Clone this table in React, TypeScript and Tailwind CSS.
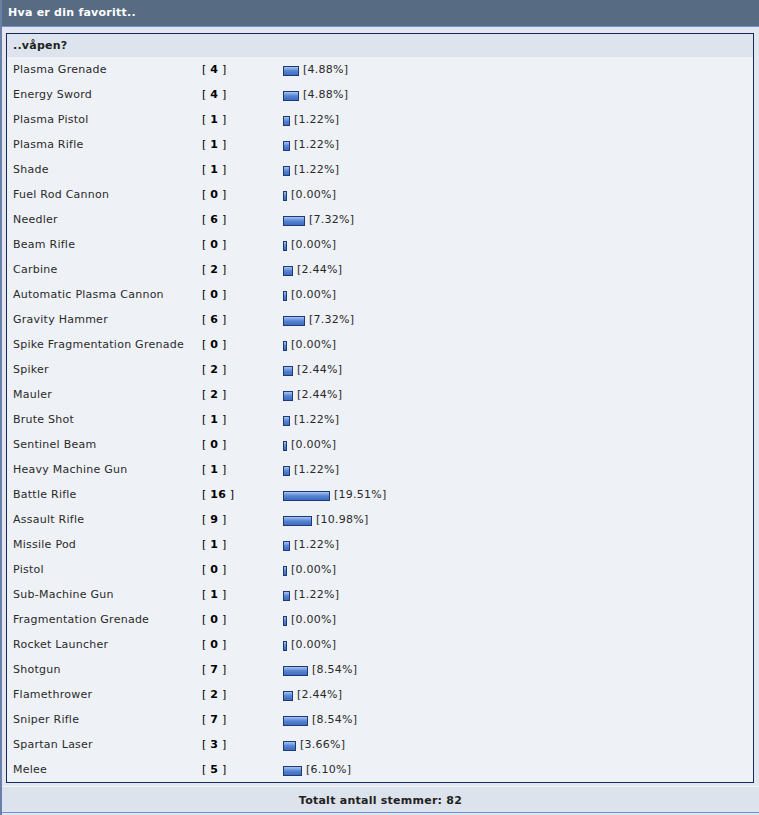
import React from 'react';

// ─── Poll data ────────────────────────────────────────────────
const options: { name: string; votes: number; pct: string }[] = [
  { name: 'Plasma Grenade', votes: 4, pct: '4.88' },
  { name: 'Energy Sword', votes: 4, pct: '4.88' },
  { name: 'Plasma Pistol', votes: 1, pct: '1.22' },
  { name: 'Plasma Rifle', votes: 1, pct: '1.22' },
  { name: 'Shade', votes: 1, pct: '1.22' },
  { name: 'Fuel Rod Cannon', votes: 0, pct: '0.00' },
  { name: 'Needler', votes: 6, pct: '7.32' },
  { name: 'Beam Rifle', votes: 0, pct: '0.00' },
  { name: 'Carbine', votes: 2, pct: '2.44' },
  { name: 'Automatic Plasma Cannon', votes: 0, pct: '0.00' },
  { name: 'Gravity Hammer', votes: 6, pct: '7.32' },
  { name: 'Spike Fragmentation Grenade', votes: 0, pct: '0.00' },
  { name: 'Spiker', votes: 2, pct: '2.44' },
  { name: 'Mauler', votes: 2, pct: '2.44' },
  { name: 'Brute Shot', votes: 1, pct: '1.22' },
  { name: 'Sentinel Beam', votes: 0, pct: '0.00' },
  { name: 'Heavy Machine Gun', votes: 1, pct: '1.22' },
  { name: 'Battle Rifle', votes: 16, pct: '19.51' },
  { name: 'Assault Rifle', votes: 9, pct: '10.98' },
  { name: 'Missile Pod', votes: 1, pct: '1.22' },
  { name: 'Pistol', votes: 0, pct: '0.00' },
  { name: 'Sub-Machine Gun', votes: 1, pct: '1.22' },
  { name: 'Fragmentation Grenade', votes: 0, pct: '0.00' },
  { name: 'Rocket Launcher', votes: 0, pct: '0.00' },
  { name: 'Shotgun', votes: 7, pct: '8.54' },
  { name: 'Flamethrower', votes: 2, pct: '2.44' },
  { name: 'Sniper Rifle', votes: 7, pct: '8.54' },
  { name: 'Spartan Laser', votes: 3, pct: '3.66' },
  { name: 'Melee', votes: 5, pct: '6.10' },
];

// bar width in px, measured off the original graphic
const barWidth = (votes: number) => (votes >= 16 ? 47 : votes >= 9 ? 29 : 4 + votes * 3);

const font = { fontFamily: '"DejaVu Sans", Verdana, sans-serif' };

export default function App() {
  return (
    <div className="w-[759px] h-[815px] bg-[#e1e6ef] text-[11px] tracking-[0.25px] border-l-2 border-[#6a80a8]" style={font}>
      <div className="h-[27px] bg-[#576b83] flex items-center pl-[6px] pt-[1px] text-white font-bold border-b border-[#7393d6]">
        Hva er din favoritt..
      </div>

      <div className="mt-[6px] ml-[4px] w-[748px] border border-[#14295c]">
        <div className="h-[23px] bg-[#dde4ee] flex items-center pl-[6px] pt-[1px] font-bold text-[#222]">..våpen?</div>
        {options.map((o) => (
          <div key={o.name} className="h-[25px] bg-[#eef1f6] flex items-center pl-[6px] pt-[2px] text-[#2a2a2a]">
            <div className="w-[189px] shrink-0">{o.name}</div>
            <div className="w-[81px] shrink-0 text-black">
              [ <span className="font-bold">{o.votes}</span> ]
            </div>
            <div className="flex items-center">
              <div
                className="h-[10px] border border-[#1c3a78] bg-gradient-to-b from-[#a9c4ee] via-[#5584d2] to-[#3f6cc0]"
                style={{ width: barWidth(o.votes) }}
              />
              <span className="ml-[4px]">[{o.pct}%]</span>
            </div>
          </div>
        ))}
      </div>

      <div className="mt-[3px] h-[27px] bg-[#dde3ec] pt-[3px] border-t border-[#f0f3f8] border-b border-b-[#7090d0] flex items-center justify-center font-bold text-[#222]">
        Totalt antall stemmer: 82
      </div>
    </div>
  );
}
